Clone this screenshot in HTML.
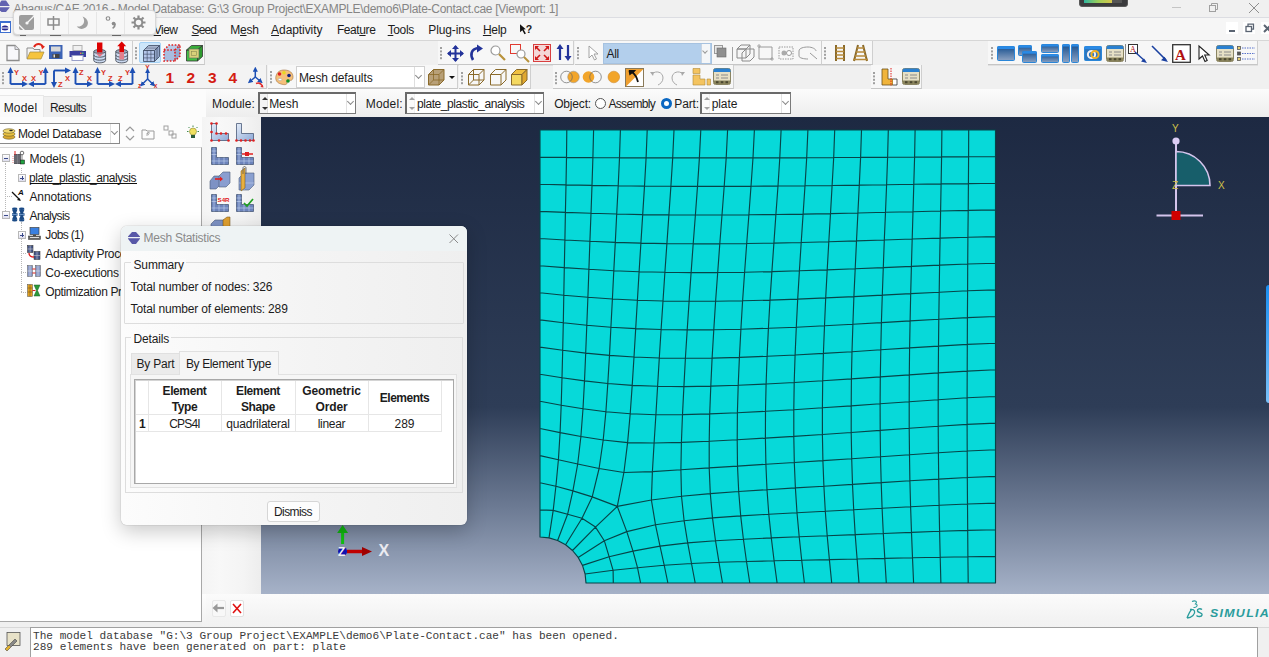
<!DOCTYPE html>
<html><head><meta charset="utf-8">
<style>
*{margin:0;padding:0;box-sizing:border-box}
html,body{width:1269px;height:657px;overflow:hidden;background:#f0f0f0;font-family:"Liberation Sans",sans-serif;font-size:12px;color:#1c1c1c}
.a{position:absolute}
.t{position:absolute;white-space:nowrap;line-height:14px;font-size:12px}
u{text-decoration:underline;text-underline-offset:1px}
svg{position:absolute;overflow:visible}
.tb{position:absolute;background:#f7f7f7;border-right:1px solid #cfcfcf;border-bottom:1px solid #c6c6c6;box-shadow:0 1px 0 #e0e0e0}
.grip{position:absolute;width:2px;height:2px !important;margin-top:1px;background:#a0a0a0;box-shadow:0 3.4px #a0a0a0,0 6.8px #a0a0a0,0 10.2px #a0a0a0}
.combo{position:absolute;background:#fff;border:1px solid #a9a9a9}
.dd{position:absolute;right:1px;top:1px;bottom:1px;width:9px;border-left:1px solid #e2e2e2;background:#fff}
.dd:after{content:"";position:absolute;left:1px;top:5px;width:4px;height:4px;border-right:1px solid #777;border-bottom:1px solid #777;transform:rotate(45deg)}
.spin{position:absolute;left:1px;top:1px;bottom:1px;width:9px;border-right:1px solid #e0e0e0;background:#f4f4f4}
.spin:before{content:"";position:absolute;left:2px;top:3px;border-left:3px solid transparent;border-right:3px solid transparent;border-bottom:3px solid #333}
.spin:after{content:"";position:absolute;left:2px;bottom:3px;border-left:3px solid transparent;border-right:3px solid transparent;border-top:3px solid #333}
.mono{position:absolute;white-space:pre;font-family:"Liberation Mono",monospace;font-size:11.1px;line-height:11px;color:#111}
</style></head><body>

<!-- title bar -->
<div class="a" style="left:0;top:0;width:1269px;height:18px;background:#f0f0f0"></div>
<svg style="left:0;top:0" width="12" height="14"><path d="M1.5 0.5H6L9.5 5.5V6H-2.5V5.5Z" fill="#6262b0"/><path d="M-2.5 7.2H9.5V7.7L6 12H1.5L-2.5 7.7Z" fill="#6262b0"/></svg>
<div class="t" style="left:13.5px;top:1.5px;color:#858585;letter-spacing:-0.28px">Abaqus/CAE 2016 - Model Database: G:\3 Group Project\EXAMPLE\demo6\Plate-Contact.cae [Viewport: 1]</div>
<div class="a" style="left:1079px;top:-4px;width:49px;height:11px;background:#3b3b3d;border-radius:3px;border:1px solid #5a5a5a"></div>
<div class="a" style="left:1084px;top:0px;width:28px;height:3px;background:linear-gradient(90deg,#2fb5a0,#9bcf5a,#d7c74b)"></div>
<div class="a" style="left:1112px;top:0px;width:10px;height:3px;background:#555"></div>
<div class="a" style="left:1172px;top:7px;width:9px;height:1px;background:#c4c4c4"></div>
<svg style="left:1208px;top:2px" width="12" height="12"><rect x="1.5" y="3.5" width="6" height="6" fill="none" stroke="#a0a0a0"/><path d="M3.5 3.5V1.5h6v6h-2" fill="none" stroke="#a0a0a0"/></svg>
<svg style="left:1248px;top:2px" width="12" height="12"><path d="M1 1L11 11M11 1L1 11" stroke="#8e8e8e" stroke-width="1"/></svg>

<!-- menubar -->
<div class="a" style="left:0;top:17px;width:1269px;height:23px;background:#f6f6f6;border-top:1px solid #dcdde2"></div>
<div class="a" style="left:0;top:40px;width:1269px;height:1px;background:#d6d6d6"></div>
<svg style="left:0;top:21px" width="12" height="12"><rect x="0.5" y="0.5" width="10" height="11" fill="#fff" stroke="#3d6fd0"/><rect x="0" y="0" width="11" height="2" fill="#3d6fd0"/><ellipse cx="5" cy="7" rx="3.5" ry="2.5" fill="#2a2a8e"/><rect x="1" y="6.5" width="8" height="1" fill="#fff"/></svg>
<div class="t" style="left:153.7px;top:23px;letter-spacing:-0.50px"><u>V</u>iew</div>
<div class="t" style="left:191.6px;top:23px;letter-spacing:-0.87px"><u>S</u>eed</div>
<div class="t" style="left:230.2px;top:23px;letter-spacing:-0.17px">M<u>e</u>sh</div>
<div class="t" style="left:271.1px;top:23px;letter-spacing:-0.08px"><u>A</u>daptivity</div>
<div class="t" style="left:336.9px;top:23px;letter-spacing:-0.40px">Feat<u>u</u>re</div>
<div class="t" style="left:387.7px;top:23px;letter-spacing:-0.38px"><u>T</u>ools</div>
<div class="t" style="left:428.3px;top:23px;letter-spacing:-0.14px">Plu<u>g</u>-ins</div>
<div class="t" style="left:482.9px;top:23px;letter-spacing:-0.30px"><u>H</u>elp</div>
<svg style="left:519px;top:23px" width="14" height="12"><path d="M1 1.2L6.8 6.2L4.6 6.6L6.9 10.5L5.5 11.2L3.3 7.3L1.1 9.2Z" fill="#111"/><text x="6.8" y="10" font-size="10.5" font-family="Liberation Sans" font-weight="bold" fill="#222">?</text></svg>
<!-- mdi controls -->
<div class="a" style="left:1226px;top:22px;width:12px;height:12px;background:#fff"></div>
<div class="a" style="left:1229px;top:30px;width:6px;height:2px;background:#5a6472"></div>
<div class="a" style="left:1243px;top:22px;width:12px;height:12px;background:#fff"></div>
<svg style="left:1245px;top:23px" width="10" height="10"><rect x="1" y="3.5" width="5.5" height="5" fill="none" stroke="#5a6472" stroke-width="1.3"/><path d="M3 3V1.2h5.5v5h-1.5" fill="none" stroke="#5a6472" stroke-width="1.3"/></svg>
<div class="a" style="left:1261px;top:22px;width:12px;height:12px;background:#fff"></div>
<svg style="left:1263px;top:24px" width="10" height="10"><path d="M1 1L8 8M8 1L1 8" stroke="#5a6472" stroke-width="2"/></svg>

<!-- IME popup -->
<div class="a" style="left:12.5px;top:10px;width:143px;height:25px;background:#f7f7f7;border:1px solid #d8d8d8;border-radius:4px;box-shadow:0 1px 2px rgba(0,0,0,0.22)"></div>
<div class="a" style="left:40px;top:12px;width:1px;height:22px;background:#e6e6e6"></div>
<div class="a" style="left:68px;top:12px;width:1px;height:22px;background:#e6e6e6"></div>
<div class="a" style="left:96px;top:12px;width:1px;height:22px;background:#e6e6e6"></div>
<div class="a" style="left:124px;top:12px;width:1px;height:22px;background:#e6e6e6"></div>
<svg style="left:19px;top:15px" width="16" height="16"><rect x="0" y="0" width="15" height="15" rx="2" fill="#9d9d9d"/><path d="M-1 9L7 17M8 8L15 1" stroke="#f6f6f6" stroke-width="1.3"/><circle cx="8" cy="8" r="1.6" fill="#f6f6f6"/></svg>
<svg style="left:46px;top:15px" width="16" height="16"><rect x="2" y="4" width="11" height="6" fill="none" stroke="#8c8c8c" stroke-width="1.5"/><path d="M7.5 1V15" stroke="#8c8c8c" stroke-width="1.5"/></svg>
<svg style="left:75px;top:15px" width="16" height="16"><path d="M7.6 1.4C13.5 3 15.5 11 8.5 13.6C6 14.4 3.5 13.4 1.7 11.5C7.5 12.4 11.5 7 7.6 1.4Z" fill="#a0a0a0"/></svg>
<svg style="left:104px;top:15px" width="16" height="16"><circle cx="4" cy="3.5" r="1.8" fill="none" stroke="#8c8c8c" stroke-width="1.1"/><circle cx="9.6" cy="8.6" r="1.9" fill="#8c8c8c"/><path d="M11.2 8.8c0 2-1 3.6-2.6 4.6" stroke="#8c8c8c" stroke-width="1.6" fill="none"/></svg>
<svg style="left:131px;top:15px" width="16" height="16"><circle cx="7.5" cy="7.5" r="3.8" fill="none" stroke="#8c8c8c" stroke-width="2"/><path d="M7.5 0.5V3M7.5 12V14.5M0.5 7.5H3M12 7.5H14.5M2.5 2.5L4.3 4.3M10.7 10.7L12.5 12.5M12.5 2.5L10.7 4.3M4.3 10.7L2.5 12.5" stroke="#8c8c8c" stroke-width="2.2"/></svg>


<div class="a" style="left:20px;top:35px;width:6px;height:1px;background:#666"></div>
<div class="a" style="left:50px;top:35px;width:11px;height:1px;background:#666"></div>
<div class="a" style="left:112px;top:35px;width:9px;height:1px;background:#666"></div>
<!-- toolbar rows -->
<div class="a" style="left:0;top:41px;width:1269px;height:48px;background:#f0f0f0"></div>
<!-- R1 T1 -->
<div class="tb" style="left:0;top:41px;width:133px;height:24px;border-right:1px solid #cfcfcf"></div>
<svg style="left:6px;top:44px" width="14" height="18"><path d="M1 1.5h8l4 4v11h-12z" fill="#f7f7fb" stroke="#8d8d8d" stroke-width="1.3"/><path d="M9 1.5v4h4" fill="#e0e0e8" stroke="#9a9a9a"/></svg>
<svg style="left:26px;top:43px" width="20" height="18"><path d="M1 5h6l1 1.5h6v9H1z" fill="#f4f4f4" stroke="#8c8c8c"/><path d="M1 16L4 9h14l-3 7z" fill="#f6c43c" stroke="#a08a40" stroke-width="0.7"/><path d="M8 4C10 0 15 0 17 4" fill="none" stroke="#e0261b" stroke-width="2"/><path d="M15 2L19 3.5L16 6.5Z" fill="#e0261b"/></svg>
<svg style="left:49px;top:45px" width="14" height="15"><rect x="0" y="0" width="13.5" height="14" fill="#3c63b5"/><rect x="2" y="1.5" width="9.5" height="5" fill="#d8d8d8"/><rect x="3.5" y="9" width="7" height="4" fill="#444"/><rect x="4.5" y="9.5" width="1.5" height="3" fill="#ddd"/></svg>
<svg style="left:69px;top:45px" width="18" height="17"><rect x="4" y="0.5" width="9" height="5" fill="#f0f0f0" stroke="#b0b0b0"/><path d="M0.5 6h16.5v6h-16.5z" fill="#3b3f9e"/><rect x="3" y="10.5" width="11" height="5" fill="#fff" stroke="#9aa0c8"/><rect x="11" y="7.5" width="1.5" height="1.5" fill="#e08050"/><rect x="13" y="7.5" width="1.5" height="1.5" fill="#50c070"/></svg>
<svg style="left:93px;top:42px" width="14" height="21"><path d="M0.8 9.5v9a5.9 2.4 0 0 0 11.8 0v-9" fill="#c9d8ef" stroke="#4a4f5a" stroke-width="0.9"/><path d="M0.8 13a5.9 2.2 0 0 0 11.8 0M0.8 16a5.9 2.2 0 0 0 11.8 0" fill="none" stroke="#4a4f5a" stroke-width="0.9"/><ellipse cx="6.7" cy="9.5" rx="5.9" ry="2" fill="#9aa8bc" stroke="#4a4f5a" stroke-width="0.9"/><path d="M3 11.5h7.4l-3.7 3.6z" fill="#e27884"/><rect x="4" y="0.5" width="5.4" height="10" fill="#dd0000"/></svg>
<svg style="left:115px;top:41px" width="14" height="22"><path d="M0.8 10.5v9a5.9 2.4 0 0 0 11.8 0v-9" fill="#c9d8ef" stroke="#4a4f5a" stroke-width="0.9"/><path d="M0.8 14a5.9 2.2 0 0 0 11.8 0M0.8 17a5.9 2.2 0 0 0 11.8 0" fill="none" stroke="#4a4f5a" stroke-width="0.9"/><ellipse cx="6.7" cy="10.5" rx="5.9" ry="2" fill="#9aa8bc" stroke="#4a4f5a" stroke-width="0.9"/><rect x="4.4" y="11" width="4.6" height="7.5" fill="#e2808c"/><path d="M6.7 0.5L11.2 5.2H9V11H4.4V5.2H2.2z" fill="#dd0000"/></svg>
<!-- R1 T2 -->
<div class="tb" style="left:133px;top:41px;width:72px;height:24px"></div>
<div class="grip" style="left:135px;top:46px;height:13px"></div>
<div class="a" style="left:139px;top:42px;width:22px;height:21px;background:#cde6fa;border:1px solid #a6d2f5;border-radius:2px"></div>
<svg style="left:143px;top:45px" width="17" height="17"><path d="M0.5 5.5h11v11h-11z" fill="#b4c6ea" stroke="#3a4660" stroke-width="0.8"/><path d="M0.5 5.5l5-5h11l-5 5z" fill="#c8d6f0" stroke="#3a4660" stroke-width="0.8"/><path d="M11.5 5.5l5-5v11l-5 5z" fill="#a2b6dc" stroke="#3a4660" stroke-width="0.8"/><path d="M4.2 5.5v11M7.9 5.5v11M0.5 9.2h11M0.5 12.9h11M2.2 3.8h11M3.9 2.1h11M14.8 2.2v11M13.2 3.9v11" stroke="#3a4660" stroke-width="0.6"/></svg>
<svg style="left:163px;top:44px" width="18" height="18"><path d="M1 6h11v11H1z" fill="#a8bde0"/><path d="M1 6l5-5h11l-5 5z" fill="#b8cbe8"/><path d="M12 6l5-5v11l-5 5z" fill="#93abd2"/><path d="M1 6h11v11H1zM1 6l5-5h11v11l-5 5M12 6l5-5" fill="none" stroke="#e02020" stroke-width="1.6" stroke-dasharray="1.6 1.6"/></svg>
<svg style="left:186px;top:45px" width="17" height="17"><path d="M0.5 5h11v11h-11z" fill="#43c043" stroke="#333" stroke-width="0.8"/><path d="M0.5 5l5-4.5h11l-5 4.5z" fill="#3aad3a" stroke="#333" stroke-width="0.8"/><path d="M11.5 5l5-4.5v11l-5 4.5z" fill="#2e9a2e" stroke="#333" stroke-width="0.8"/><rect x="3" y="4" width="10" height="9" fill="#d8d27a" stroke="#666" stroke-width="0.6"/><rect x="5.5" y="6.5" width="5" height="4" fill="none" stroke="#8a8a50" stroke-width="0.6"/></svg>
<!-- R1 T3 view manip -->
<div class="tb" style="left:438px;top:41px;width:136px;height:24px"></div>
<div class="grip" style="left:440px;top:46px;height:13px"></div>
<svg style="left:447px;top:45px" width="17" height="17"><path d="M8.5 1v15M1 8.5h15" stroke="#23339a" stroke-width="2"/><path d="M8.5 0l3.5 4h-7zM8.5 17l3.5-4h-7zM0 8.5l4-3.5v7zM17 8.5l-4-3.5v7z" fill="#23339a"/></svg>
<svg style="left:470px;top:44px" width="14" height="18"><path d="M3 16C0 11 1 5 8 4" fill="none" stroke="#23339a" stroke-width="2.6"/><path d="M7 0.5l6 4-6 4z" fill="#23339a"/></svg>
<svg style="left:490px;top:45px" width="16" height="16"><circle cx="5.5" cy="5.5" r="4.5" fill="#fff" stroke="#9a9a9a" stroke-width="1.2"/><path d="M9 9l6 6" stroke="#b8923a" stroke-width="2.2"/></svg>
<svg style="left:510px;top:44px" width="20" height="18"><rect x="0.5" y="0.5" width="10" height="9" fill="none" stroke="#e03a30" stroke-width="1"/><circle cx="11" cy="10" r="4" fill="#fff" stroke="#9a9a9a" stroke-width="1.2"/><path d="M14 13l5 5" stroke="#b8923a" stroke-width="2"/></svg>
<svg style="left:533px;top:44px" width="18" height="18"><rect x="0.5" y="0.5" width="17" height="17" fill="#f4d8d8" stroke="#d84040" stroke-width="1"/><path d="M3 3l4 4M15 3l-4 4M3 15l4-4M15 15l-4-4" stroke="#d01818" stroke-width="1.6"/><path d="M2 2h4l-4 4zM16 2h-4l4 4zM2 16h4l-4-4zM16 16h-4l4-4z" fill="#d01818"/></svg>
<svg style="left:556px;top:44px" width="17" height="17"><path d="M4 16V3M12 1v13" stroke="#23339a" stroke-width="2.2"/><path d="M4 0l3.5 5h-7zM12 17l3.5-5h-7z" fill="#23339a"/></svg>
<!-- R1 T4 select -->
<div class="tb" style="left:575px;top:41px;width:247px;height:24px"></div>
<div class="grip" style="left:577px;top:46px;height:13px"></div>
<svg style="left:588px;top:45px" width="12" height="16"><path d="M1 1v12l3-3 2.5 5 2-1-2.5-5h4z" fill="#fff" stroke="#9a9a9a" stroke-width="0.9"/></svg>
<div class="a" style="left:603px;top:43px;width:109px;height:21px;background:#b3cfec;border:1px solid #a6c2e0"></div>
<div class="a" style="left:701px;top:44px;width:9px;height:19px;background:#f4f6f8;border-left:1px solid #c8d4e2"></div>
<div class="a" style="left:703px;top:49px;width:4px;height:4px;border-right:1px solid #999;border-bottom:1px solid #999;transform:rotate(45deg)"></div>
<div class="t" style="left:606.5px;top:47px;letter-spacing:-0.35px">All</div>
<svg style="left:714px;top:45px" width="14" height="16"><rect x="0.5" y="0.5" width="8" height="8" fill="#e8e8e8" stroke="#9a9a9a"/><rect x="3" y="3" width="9" height="9" fill="#8f8f8f" stroke="#6a6a6a" stroke-width="0.6"/></svg>
<div class="a" style="left:732px;top:47px;width:1px;height:14px;background:#a0a0a0"></div>
<svg style="left:736px;top:44px" width="20" height="18"><path d="M1 5l4-4h9l-4 4zM1 5h9v9H1zM10 5l4-4v9l-4 4" fill="#f6f6f6" stroke="#8a8a8a" stroke-width="1"/><path d="M6 9l4-4h8v8l-4 4H6z" fill="none" stroke="#8a8a8a"/></svg>
<svg style="left:757px;top:44px" width="18" height="18"><path d="M2 3h13v12H2z" fill="none" stroke="#9a9a9a"/><path d="M2 0v4M0 2h4M15 13v4M13 15h4" stroke="#9a9a9a" stroke-width="0.8"/></svg>
<svg style="left:777px;top:44px" width="20" height="18"><path d="M2 3h14v12H2z" fill="none" stroke="#9a9a9a" stroke-dasharray="1.5 1"/><circle cx="7" cy="9" r="2.5" fill="#aaa"/><circle cx="12" cy="9" r="2.5" fill="#fff" stroke="#999"/></svg>
<svg style="left:798px;top:44px" width="22" height="18"><path d="M1 7C1 4 6 3 10 3s8 2 8 4" fill="none" stroke="#9a9a9a"/><path d="M1 7v5c0 2 5 3 9 3M12 9l7 6" stroke="#9a9a9a" fill="none"/></svg>
<!-- R1 T5 -->
<div class="tb" style="left:822px;top:41px;width:51px;height:24px"></div>
<div class="grip" style="left:824px;top:46px;height:13px"></div>
<svg style="left:833px;top:45px" width="14" height="16"><path d="M3 0v16M11 0v16" stroke="#8a6a2a" stroke-width="2"/><path d="M3 3h8M3 6.5h8M3 10h8M3 13.5h8" stroke="#b88a3a" stroke-width="1.6"/></svg>
<svg style="left:852px;top:45px" width="17" height="16"><path d="M6 0L2 16M11 0l4 16" stroke="#8a6a2a" stroke-width="2"/><path d="M5 3h7M4 7h9M3 11h11M1 14.5h15" stroke="#b88a3a" stroke-width="1.6"/></svg>
<!-- R1 T6 windows -->
<div class="tb" style="left:988px;top:41px;width:270px;height:24px"></div>
<div class="grip" style="left:991px;top:46px;height:13px"></div>
<svg style="left:0;top:0" width="0" height="0"><defs><linearGradient id="wg" x1="0" y1="0" x2="0" y2="1"><stop offset="0" stop-color="#174f8e"/><stop offset="1" stop-color="#8da3c3"/></linearGradient></defs></svg>
<svg style="left:997px;top:46px" width="19" height="16"><rect x="0.5" y="0.5" width="17" height="14" rx="1" fill="url(#wg)" stroke="#2a86d8"/><rect x="0.5" y="0.5" width="17" height="2.5" fill="#2a8ae6"/></svg>
<svg style="left:1018px;top:45px" width="20" height="18"><rect x="0.5" y="0.5" width="13" height="10" rx="1" fill="url(#wg)" stroke="#2a86d8"/><rect x="0.5" y="0.5" width="13" height="2.2" fill="#2a8ae6"/><rect x="4.5" y="6.5" width="14" height="11" rx="1" fill="url(#wg)" stroke="#2a86d8"/><rect x="4.5" y="6.5" width="14" height="2.2" fill="#2a8ae6"/></svg>
<svg style="left:1041px;top:44px" width="18" height="19"><rect x="0.5" y="0.5" width="17" height="8" rx="1" fill="url(#wg)" stroke="#2a86d8"/><rect x="0.5" y="0.5" width="17" height="2" fill="#2a8ae6"/><rect x="0.5" y="10.5" width="17" height="8" rx="1" fill="url(#wg)" stroke="#2a86d8"/><rect x="0.5" y="10.5" width="17" height="2" fill="#2a8ae6"/></svg>
<svg style="left:1062px;top:44px" width="18" height="19"><rect x="0.5" y="0.5" width="7" height="18" rx="1" fill="url(#wg)" stroke="#2a86d8"/><rect x="0.5" y="0.5" width="7" height="2" fill="#2a8ae6"/><rect x="9.5" y="0.5" width="7" height="18" rx="1" fill="url(#wg)" stroke="#2a86d8"/><rect x="9.5" y="0.5" width="7" height="2" fill="#2a8ae6"/></svg>
<svg style="left:1084px;top:46px" width="19" height="16"><rect x="0.5" y="0.5" width="17" height="14" rx="1" fill="#2a76c0" stroke="#2a86d8"/><rect x="0.5" y="0.5" width="17" height="2.5" fill="#2a8ae6"/><circle cx="7.5" cy="8.5" r="3.6" fill="none" stroke="#f4f0f0" stroke-width="2"/><circle cx="11" cy="8.5" r="3.6" fill="none" stroke="#f0b020" stroke-width="2"/></svg>
<svg style="left:1106px;top:45px" width="19" height="18"><rect x="0.5" y="0.5" width="17" height="16" rx="2" fill="#e6e0c6" stroke="#8a8462"/><path d="M0.5 4V2.5a2 2 0 0 1 2-2h13a2 2 0 0 1 2 2V4z" fill="#2a80d0"/><path d="M3 7h3M8 7h7M3 10h3M8 10h7" stroke="#8a8a8a" stroke-width="1.1"/><rect x="1" y="12.5" width="16" height="3.5" fill="#8a845c"/><rect x="3" y="13.2" width="2.5" height="2" fill="#4a4630"/><rect x="7.8" y="13.2" width="2.5" height="2" fill="#4a4630"/><rect x="12.5" y="13.2" width="2.5" height="2" fill="#4a4630"/></svg>
<div class="a" style="left:1125px;top:44px;width:1px;height:18px;background:#888"></div>
<svg style="left:1128px;top:44px" width="20" height="19"><rect x="0.5" y="0.5" width="9" height="9" fill="#fff" stroke="#333"/><text x="2" y="8" font-size="8" font-family="Liberation Serif" fill="#b01010">A</text><path d="M7 8l10 9" stroke="#1a40a0" stroke-width="1.4"/><path d="M19 19l-6-1.5 3-3z" fill="#1a40a0"/></svg>
<svg style="left:1151px;top:45px" width="18" height="18"><path d="M1 1l14 14" stroke="#1a40a0" stroke-width="1.6"/><path d="M17 17l-7-1.8 3.5-3.5z" fill="#1a40a0"/></svg>
<svg style="left:1172px;top:44px" width="19" height="19"><rect x="0.7" y="0.7" width="17.6" height="17.6" fill="#fff" stroke="#333" stroke-width="1.3"/><text x="3" y="15.5" font-size="15" font-family="Liberation Serif" font-weight="bold" fill="#b01010">A</text></svg>
<svg style="left:1198px;top:45px" width="13" height="17"><path d="M1 1v13l3.5-3 2.5 5.5 2.2-1-2.5-5.5h4.5z" fill="#fff" stroke="#222" stroke-width="1.1"/></svg>
<svg style="left:1216px;top:45px" width="19" height="18"><rect x="0.5" y="0.5" width="17" height="16" rx="2" fill="#e6e0c6" stroke="#8a8462"/><path d="M0.5 4V2.5a2 2 0 0 1 2-2h13a2 2 0 0 1 2 2V4z" fill="#2a80d0"/><path d="M3 7h3M8 7h7M3 10h3M8 10h7" stroke="#8a8a8a" stroke-width="1.1"/><rect x="1" y="12.5" width="16" height="3.5" fill="#8a845c"/><rect x="3" y="13.2" width="2.5" height="2" fill="#4a4630"/><rect x="7.8" y="13.2" width="2.5" height="2" fill="#4a4630"/><rect x="12.5" y="13.2" width="2.5" height="2" fill="#4a4630"/></svg>
<svg style="left:1237px;top:46px" width="19" height="15"><rect x="0.5" y="0.5" width="3" height="3" fill="#e8d070" stroke="#555" stroke-width="0.8"/><rect x="0.5" y="6" width="3" height="3" fill="#555" stroke="#555" stroke-width="0.8"/><rect x="0.5" y="11.5" width="3" height="3" fill="#e8d070" stroke="#555" stroke-width="0.8"/><path d="M5 2h13M5 7.5h13M5 13h13" stroke="#3050c0" stroke-width="0.8" stroke-dasharray="1.5 1"/></svg>


<!-- R2 T1 views -->
<div class="tb" style="left:0;top:65px;width:267px;height:24px;background:#f3f3f3"></div>
<div class="grip" style="left:2px;top:71px;height:12px"></div>
<svg style="left:0;top:65px" width="267" height="24" font-family="Liberation Sans" font-weight="bold" font-size="7.5">
<defs><marker id="ah2" viewBox="0 0 6 6" refX="2" refY="3" markerWidth="3.4" markerHeight="3.4" orient="auto"><path d="M0 0L6 3L0 6z" fill="#1c4fb4"/></marker><marker id="ah" viewBox="0 0 6 6" refX="3" refY="3" markerWidth="3.2" markerHeight="3.2" orient="auto"><path d="M0 0L6 3L0 6z" fill="#1c4fb4"/></marker></defs>
<g stroke="#1c4fb4" stroke-width="1.9" fill="none" marker-end="url(#ah)">
<path d="M10.5 19V5"/><path d="M10.5 19H25"/>
<path d="M45.5 19V5"/><path d="M45.5 19H31"/>
<path d="M54 5.5H68"/><path d="M54 5.5V20"/>
<path d="M75.5 19V5"/><path d="M75.5 19H90"/>
<path d="M97.5 19V5"/><path d="M97.5 19H112"/>
<path d="M132.5 19V5"/><path d="M132.5 19H118"/>
</g>
<g fill="#d8301e">
<text x="14" y="9.5">Y</text><text x="22" y="15.5">X</text>
<text x="38.5" y="9.5">Y</text><text x="31" y="15.5">X</text>
<text x="65" y="15.5">X</text><text x="58" y="22">Z</text>
<text x="79" y="9.5">Z</text><text x="87" y="15.5">X</text>
<text x="101" y="9.5">Y</text><text x="108" y="15.5">Z</text>
<text x="125" y="9.5">Y</text><text x="118" y="15.5">Z</text>
<text x="145.3" y="5.3" font-size="6.5">Y</text><text x="138" y="22.5" font-size="6.5">z</text><text x="153.8" y="23" font-size="6.5">x</text>
</g>
<g stroke="#1c4fb4" stroke-width="1.5" fill="none" marker-end="url(#ah2)"><path d="M147.6 14V6.5"/><path d="M147.6 14L142.5 19"/><path d="M147.6 14L152.7 19"/><path d="M255.3 12V5"/><path d="M255.3 12L250.5 16"/><path d="M255.3 12L260.1 16"/></g>
<path d="M256 18.5c3-1.5 5 0 6.5 2.5" stroke="#e02a2a" stroke-width="1.4" fill="none"/><path d="M263.5 22.5l-3.2-0.5 2.4-2.2z" fill="#e02a2a"/>
<g fill="#d41c12" font-size="15.5"><text x="165.5" y="18">1</text><text x="186.5" y="18">2</text><text x="208" y="18">3</text><text x="228.5" y="18">4</text></g>
</svg>
<!-- R2 T2 -->
<div class="tb" style="left:268px;top:65px;width:190px;height:24px"></div>
<div class="grip" style="left:270px;top:70px;height:13px"></div>
<svg style="left:275px;top:69px" width="19" height="16"><path d="M9 1C15 1 18 4 18 8c0 3-2 4-4 3-2-1-3 1-2 3 0 2-3 2-6 1C2 14 0 11 1 7 2 3 5 1 9 1z" fill="#f5c07a" stroke="#a07040" stroke-width="0.6"/><circle cx="4.5" cy="5" r="1.8" fill="#e02020"/><circle cx="9" cy="3.8" r="1.8" fill="#e8d820"/><circle cx="14" cy="6.5" r="1.8" fill="#102080"/><circle cx="13" cy="12" r="1.8" fill="#109020"/><ellipse cx="5" cy="10.5" rx="1.8" ry="1.2" fill="#fff" stroke="#999" stroke-width="0.5"/></svg>
<div class="combo" style="left:296px;top:66px;width:129px;height:22px;border-color:#d0d0d0"></div>
<div class="a" style="left:414px;top:67px;width:10px;height:20px;border-left:1px solid #dedede;background:#fff"></div>
<div class="a" style="left:416px;top:73px;width:5px;height:5px;border-right:1px solid #8a8a8a;border-bottom:1px solid #8a8a8a;transform:rotate(45deg)"></div>
<div class="t" style="left:298.9px;top:71.1px;letter-spacing:-0.08px">Mesh defaults</div>
<svg style="left:428px;top:69px" width="28" height="17"><path d="M0.5 5.5l5-5h10.5v10.5l-5 5H0.5z" fill="#b8a078" stroke="#8a6a2a"/><path d="M0.5 5.5h10.5v10.5M11 5.5l5-5M5.5 0.5v10.5h10.5M5.5 11l-5 5" fill="none" stroke="#8a6a2a" stroke-width="0.8"/><path d="M21 7h6l-3 3z" fill="#111"/></svg>
<!-- R2 T3 -->
<div class="tb" style="left:459px;top:65px;width:72px;height:24px"></div>
<div class="grip" style="left:461px;top:71px;height:12px"></div>
<svg style="left:468px;top:69px" width="17" height="17"><path d="M0.5 5.5l5-5h10.5v10.5l-5 5H0.5z M0.5 5.5h10.5v10.5M11 5.5l5-5M5.5 0.5v10.5h10.5M5.5 11l-5 5" fill="none" stroke="#8a6a2a" stroke-width="1"/></svg>
<svg style="left:490px;top:69px" width="17" height="17"><path d="M0.5 5.5l5-5h10.5v10.5l-5 5H0.5z M0.5 5.5h10.5v10.5M11 5.5l5-5" fill="none" stroke="#8a6a2a" stroke-width="1"/></svg>
<svg style="left:511px;top:69px" width="17" height="17"><path d="M0.5 5.5h10.5v10.5H0.5z" fill="#f4d860" stroke="#8a6a2a"/><path d="M0.5 5.5l5-5h10.5l-5 5z" fill="#f0c040" stroke="#8a6a2a"/><path d="M11 5.5l5-5v10.5l-5 5z" fill="#e0a830" stroke="#8a6a2a"/></svg>
<!-- R2 T4 -->
<div class="tb" style="left:553px;top:65px;width:181px;height:24px"></div>
<div class="grip" style="left:555px;top:71px;height:12px"></div>
<svg style="left:560px;top:70px" width="20" height="14"><circle cx="13.5" cy="7" r="5.8" fill="#f2a52a"/><circle cx="6.5" cy="7" r="5.8" fill="none" stroke="#666" stroke-width="0.7"/><circle cx="13.5" cy="7" r="5.8" fill="none" stroke="#888" stroke-width="0.5"/></svg>
<svg style="left:582px;top:70px" width="20" height="14"><circle cx="6.5" cy="7" r="5.8" fill="#f2a52a"/><circle cx="13.5" cy="7" r="5.8" fill="none" stroke="#666" stroke-width="0.7"/></svg>
<svg style="left:607px;top:70px" width="14" height="14"><circle cx="6.8" cy="7" r="5.8" fill="#f2a52a" stroke="#c88020" stroke-width="0.5"/></svg>
<svg style="left:625px;top:68px" width="20" height="19"><rect x="0.5" y="0.5" width="18" height="18" fill="#fff" stroke="#8a7a5a"/><path d="M1 1h17.5L1 18.5z" fill="#f0a030"/><path d="M4 3l5 0-1.5 1.5C11 7 12 10 13 14" fill="none" stroke="#111" stroke-width="1.8"/><path d="M3.5 2.5l6 1-5 4z" fill="#111"/></svg>
<svg style="left:650px;top:70px" width="14" height="16"><path d="M2 4C6 0 13 2 13 8c0 4-3 6-5 7" fill="none" stroke="#a8a8a8" stroke-width="1"/><path d="M0 2l4 0-1 4z" fill="#a8a8a8"/></svg>
<svg style="left:671px;top:70px" width="14" height="16"><path d="M12 4C8 0 1 2 1 8c0 4 3 6 5 7" fill="none" stroke="#a8a8a8" stroke-width="1"/><path d="M14 2l-4 0 1 4z" fill="#a8a8a8"/></svg>
<svg style="left:692px;top:68px" width="20" height="18"><path d="M1 0.5h7v5H1z" fill="#f4c460" stroke="#b08a3a" stroke-width="0.6"/><path d="M1 7h7v4h5v6H1z" fill="#f4c460" stroke="#b08a3a" stroke-width="0.6"/><path d="M15 11h3.5v6H15z" fill="#f4c460" stroke="#b08a3a" stroke-width="0.6"/></svg>
<svg style="left:713px;top:68px" width="19" height="18"><rect x="0.5" y="0.5" width="17" height="16" rx="2" fill="#e6e0c6" stroke="#8a8462"/><path d="M0.5 4V2.5a2 2 0 0 1 2-2h13a2 2 0 0 1 2 2V4z" fill="#2a80d0"/><path d="M3 7h3M8 7h7M3 10h3M8 10h7" stroke="#8a8a8a" stroke-width="1.1"/><rect x="1" y="12.5" width="16" height="3.5" fill="#8a845c"/><rect x="3" y="13.2" width="2.5" height="2" fill="#4a4630"/><rect x="7.8" y="13.2" width="2.5" height="2" fill="#4a4630"/><rect x="12.5" y="13.2" width="2.5" height="2" fill="#4a4630"/></svg>
<!-- R2 T5 -->
<div class="tb" style="left:871px;top:65px;width:51px;height:24px"></div>
<div class="grip" style="left:873px;top:71px;height:12px"></div>
<svg style="left:881px;top:68px" width="17" height="18"><path d="M1 1h6v10h5v6H1z" fill="#f0b43a" stroke="#6a5020" stroke-width="0.8"/><path d="M12 11h4v6h-4" fill="#fff" stroke="#333" stroke-width="0.8"/><path d="M10 0v18" stroke="#e02020" stroke-width="1" stroke-dasharray="1.5 1"/></svg>
<svg style="left:902px;top:68px" width="19" height="18"><rect x="0.5" y="0.5" width="17" height="16" rx="2" fill="#e6e0c6" stroke="#8a8462"/><path d="M0.5 4V2.5a2 2 0 0 1 2-2h13a2 2 0 0 1 2 2V4z" fill="#2a80d0"/><path d="M3 7h3M8 7h7M3 10h3M8 10h7" stroke="#8a8a8a" stroke-width="1.1"/><rect x="1" y="12.5" width="16" height="3.5" fill="#8a845c"/><rect x="3" y="13.2" width="2.5" height="2" fill="#4a4630"/><rect x="7.8" y="13.2" width="2.5" height="2" fill="#4a4630"/><rect x="12.5" y="13.2" width="2.5" height="2" fill="#4a4630"/></svg>


<!-- module row -->
<div class="a" style="left:0;top:89px;width:1269px;height:28px;background:linear-gradient(#fbfbfb,#ededed)"></div>
<div class="a" style="left:0;top:89px;width:206px;height:28px;background:#fcfcfc"></div>
<!-- tabs -->
<div class="a" style="left:0;top:95px;width:44px;height:23px;background:#fafafa;border-top:1px solid #e8e8e8;border-right:1px solid #e8e8e8"></div>
<div class="a" style="left:44px;top:96px;width:48px;height:21px;background:#f0f0f0;border:1px solid #e4e4e4;border-left:none;border-bottom:none"></div>
<div class="t" style="left:3.7px;top:100.7px;letter-spacing:0.17px">Model</div>
<div class="t" style="left:50px;top:100.7px;letter-spacing:-0.58px">Results</div>
<div class="t" style="left:212px;top:97.2px;letter-spacing:0.02px">Module:</div>
<div class="combo" style="left:258px;top:92px;width:98px;height:22px;border:1px solid #7a7a7a;border-top:2px solid #6a6a6a;border-left:2px solid #6a6a6a"></div>
<div class="spin" style="left:260px;top:94px;width:8px;height:19px"></div>
<div class="a" style="left:346px;top:94px;width:9px;height:19px;border-left:1px solid #e2e2e2"></div>
<div class="a" style="left:348px;top:99px;width:5px;height:5px;border-right:1px solid #8a8a8a;border-bottom:1px solid #8a8a8a;transform:rotate(45deg)"></div>
<div class="t" style="left:269.2px;top:97.2px;letter-spacing:-0.07px">Mesh</div>
<div class="t" style="left:365.8px;top:97.2px;letter-spacing:0.16px">Model:</div>
<div class="combo" style="left:405px;top:92px;width:139px;height:22px;border:1px solid #7a7a7a;border-top:2px solid #6a6a6a;border-left:2px solid #6a6a6a"></div>
<div class="spin" style="left:407px;top:94px;width:8px;height:19px;opacity:0.45"></div>
<div class="a" style="left:534px;top:94px;width:9px;height:19px;border-left:1px solid #e2e2e2"></div>
<div class="a" style="left:536px;top:99px;width:5px;height:5px;border-right:1px solid #8a8a8a;border-bottom:1px solid #8a8a8a;transform:rotate(45deg)"></div>
<div class="t" style="left:416.9px;top:97.2px;letter-spacing:-0.42px">plate_plastic_analysis</div>
<div class="t" style="left:554.2px;top:97.2px;letter-spacing:-0.17px">Object:</div>
<div class="a" style="left:595px;top:98px;width:11px;height:11px;border:1px solid #555;border-radius:50%;background:#fff"></div>
<div class="t" style="left:608.4px;top:97.2px;letter-spacing:-0.67px">Assembly</div>
<div class="a" style="left:661px;top:98px;width:11px;height:11px;border:3px solid #0a67c2;border-radius:50%;background:#fff"></div>
<div class="t" style="left:674.3px;top:97.2px;letter-spacing:-0.12px">Part:</div>
<div class="combo" style="left:700px;top:92px;width:91px;height:22px;border:1px solid #7a7a7a;border-top:2px solid #6a6a6a;border-left:2px solid #6a6a6a"></div>
<div class="spin" style="left:702px;top:94px;width:8px;height:19px;opacity:0.45"></div>
<div class="a" style="left:781px;top:94px;width:9px;height:19px;border-left:1px solid #e2e2e2"></div>
<div class="a" style="left:783px;top:99px;width:5px;height:5px;border-right:1px solid #8a8a8a;border-bottom:1px solid #8a8a8a;transform:rotate(45deg)"></div>
<div class="t" style="left:711.7px;top:97.2px;letter-spacing:-0.08px">plate</div>

<!-- left panel -->
<div class="a" style="left:0;top:117px;width:202px;height:505px;background:#fcfcfc"></div>
<div class="combo" style="left:0;top:123px;width:120px;height:21px;border:1px solid #8a8a8a;border-left:none"></div>
<div class="a" style="left:110px;top:124px;width:10px;height:19px;border-left:1px solid #e0e0e0"></div>
<div class="a" style="left:112px;top:129px;width:5px;height:5px;border-right:1px solid #8a8a8a;border-bottom:1px solid #8a8a8a;transform:rotate(45deg)"></div>
<svg style="left:2px;top:127px" width="14" height="13"><ellipse cx="7" cy="10" rx="6" ry="2.2" fill="#d9a830" stroke="#6a5a20" stroke-width="0.6"/><ellipse cx="7" cy="7" rx="6" ry="2.2" fill="#e8c040" stroke="#6a5a20" stroke-width="0.6"/><ellipse cx="7" cy="4" rx="6" ry="2.2" fill="#f0d870" stroke="#6a5a20" stroke-width="0.6"/><ellipse cx="9" cy="3.5" rx="1.8" ry="0.8" fill="#222"/></svg>
<div class="t" style="left:17.9px;top:127.2px;letter-spacing:-0.28px">Model Database</div>
<svg style="left:124px;top:125px" width="12" height="17"><path d="M2 6l4-4 4 4M2 11l4 4 4-4" fill="none" stroke="#9a9a9a" stroke-width="1.2"/></svg>
<svg style="left:141px;top:126px" width="14" height="14"><path d="M1 4h4l1 1h7v8H1z" fill="none" stroke="#9a9a9a"/><path d="M6 10V7h3M8 6l-2 1.5L8 9" stroke="#9a9a9a" fill="none" stroke-width="0.8"/></svg>
<svg style="left:163px;top:125px" width="14" height="14"><rect x="1" y="1" width="4" height="4" fill="none" stroke="#a0a0a0"/><rect x="6" y="6" width="4" height="4" fill="none" stroke="#a0a0a0"/><rect x="9" y="9" width="4" height="4" fill="none" stroke="#a0a0a0"/></svg>
<svg style="left:186px;top:125px" width="14" height="16"><circle cx="7" cy="6.5" r="3.5" fill="#f0e060" stroke="#8a8a30" stroke-width="0.6"/><rect x="5" y="10" width="4" height="3" fill="#2a5a3a"/><path d="M7 0.5v1.5M1 6.5h1.5M11.5 6.5H13M2.5 2l1 1M11.5 2l-1 1" stroke="#2a7a3a" stroke-width="0.9"/></svg>
<!-- tree box -->
<div class="a" style="left:0;top:147px;width:202px;height:475px;background:#fff;border-top:1px solid #d8d8d8;border-right:1px solid #a8a8a8;border-bottom:1px solid #a8a8a8"></div>
<!-- tree lines -->
<div class="a" style="left:5px;top:163px;width:0;height:52px;border-left:1px dotted #b8b8b8"></div>
<div class="a" style="left:5px;top:196px;width:7px;height:0;border-top:1px dotted #b8b8b8"></div>
<div class="a" style="left:21px;top:168px;width:0;height:5px;border-left:1px dotted #b8b8b8"></div>
<div class="a" style="left:21px;top:222px;width:0;height:70px;border-left:1px dotted #b8b8b8"></div>
<div class="a" style="left:21px;top:253px;width:5px;height:0;border-top:1px dotted #b8b8b8"></div>
<div class="a" style="left:21px;top:272px;width:5px;height:0;border-top:1px dotted #b8b8b8"></div>
<div class="a" style="left:21px;top:292px;width:5px;height:0;border-top:1px dotted #b8b8b8"></div>
<!-- expanders -->
<div class="a" style="left:2px;top:154px;width:8px;height:8px;border:1px solid #b8b8b8;background:linear-gradient(#fff,#dde)"><div class="a" style="left:1px;top:2.5px;width:4px;height:1px;background:#3a4a8a"></div></div>
<div class="a" style="left:2px;top:211px;width:8px;height:8px;border:1px solid #b8b8b8;background:linear-gradient(#fff,#dde)"><div class="a" style="left:1px;top:2.5px;width:4px;height:1px;background:#3a4a8a"></div></div>
<div class="a" style="left:18px;top:174px;width:8px;height:8px;border:1px solid #b8b8b8;background:linear-gradient(#fff,#dde)"><div class="a" style="left:1px;top:2.5px;width:4px;height:1px;background:#3a4a8a"></div><div class="a" style="left:2.5px;top:1px;width:1px;height:4px;background:#3a4a8a"></div></div>
<div class="a" style="left:18px;top:231px;width:8px;height:8px;border:1px solid #b8b8b8;background:linear-gradient(#fff,#dde)"><div class="a" style="left:1px;top:2.5px;width:4px;height:1px;background:#3a4a8a"></div><div class="a" style="left:2.5px;top:1px;width:1px;height:4px;background:#3a4a8a"></div></div>
<!-- tree icons -->
<svg style="left:12px;top:150px" width="14" height="15"><rect x="2" y="4" width="7" height="10" fill="#5a5a62"/><path d="M2 6h7M2 8h7M2 10h7M2 12h7M5.5 4v10" stroke="#8a8a92" stroke-width="0.6"/><path d="M3 1v4" stroke="#e02020" stroke-width="1"/><path d="M1 6v8" stroke="#e04040" stroke-width="0.6" stroke-dasharray="1 1"/><circle cx="10" cy="3" r="1.8" fill="#fff" stroke="#333" stroke-width="0.7"/><rect x="8.5" y="10" width="4" height="4" fill="#20a040" stroke="#111" stroke-width="0.5"/><path d="M10 5v5" stroke="#333" stroke-width="0.6"/></svg>
<div class="t" style="left:29.5px;top:151.6px;letter-spacing:-0.17px">Models (1)</div>
<div class="t" style="left:29px;top:170.6px;letter-spacing:-0.44px">plate_plastic_analysis</div>
<div class="a" style="left:30px;top:183px;width:107px;height:1px;background:#111"></div>
<svg style="left:11px;top:188px" width="14" height="14"><path d="M1 4l8 8" stroke="#111" stroke-width="1.2"/><path d="M10 13l-4-1 2-2z" fill="#111"/><text x="7" y="7" font-size="8" font-weight="bold" font-style="italic" font-family="Liberation Sans" fill="#111">A</text></svg>
<div class="t" style="left:29.5px;top:189.6px;letter-spacing:-0.15px">Annotations</div>
<svg style="left:11px;top:207px" width="15" height="15"><g fill="#1a4a86"><path d="M1 2.5h5.5L5 6.2h1.5v2.6H5l1.5 3.7H1l1.5-3.7H1V6.2h1.5z"/><path d="M8 2.5h5.5L12 6.2h1.5v2.6H12l1.5 3.7H8l1.5-3.7H8V6.2h1.5z"/><ellipse cx="3.7" cy="1.8" rx="2.7" ry="1.3"/><ellipse cx="3.7" cy="13.2" rx="2.7" ry="1.3"/><ellipse cx="10.7" cy="1.8" rx="2.7" ry="1.3"/><ellipse cx="10.7" cy="13.2" rx="2.7" ry="1.3"/></g><path d="M1 7.5h5.5M8 7.5h5.5" stroke="#8ab0e0" stroke-width="0.7"/></svg>
<div class="t" style="left:29.5px;top:208.8px;letter-spacing:-0.59px">Analysis</div>
<svg style="left:28px;top:227px" width="13" height="13"><rect x="2" y="0.5" width="9" height="7" fill="#3a80e0" stroke="#444" stroke-width="0.7"/><rect x="5" y="7.5" width="3" height="1.5" fill="#555"/><rect x="0.5" y="9" width="12" height="3.5" fill="#666" stroke="#333" stroke-width="0.5"/><rect x="2" y="10" width="9" height="1" fill="#ddd"/></svg>
<div class="t" style="left:45.3px;top:227.6px;letter-spacing:-0.67px">Jobs (1)</div>
<svg style="left:27px;top:245px" width="14" height="15"><rect x="0.5" y="0.5" width="5.5" height="7" fill="#4a5a8a" stroke="#222" stroke-width="0.5"/><path d="M3.2 0.5v7M0.5 4h5.5" stroke="#ddd" stroke-width="0.5"/><rect x="7" y="6.5" width="6" height="8" fill="#4a5a8a" stroke="#222" stroke-width="0.5"/><path d="M10 6.5v8M7 10.5h6" stroke="#ddd" stroke-width="0.5"/><path d="M2 8c0 3 2 4 5 4" stroke="#e02020" stroke-width="1.3" fill="none"/></svg>
<div class="t" style="left:45.3px;top:246.6px;letter-spacing:-0.37px">Adaptivity Processes</div>
<svg style="left:27px;top:265px" width="14" height="12"><rect x="0.5" y="0.5" width="5" height="11" fill="#8a9ac8" stroke="#555" stroke-width="0.5"/><rect x="8.5" y="0.5" width="5" height="11" fill="#8a9ac8" stroke="#555" stroke-width="0.5"/><path d="M3 0.5v11M11 0.5v11M0.5 6h5M8.5 6h5" stroke="#eee" stroke-width="0.5"/><path d="M5.5 4h3M5.5 8h3" stroke="#e02020" stroke-width="1"/></svg>
<div class="t" style="left:45.3px;top:265.6px;letter-spacing:-0.25px">Co-executions</div>
<svg style="left:27px;top:284px" width="14" height="13"><rect x="0.5" y="0.5" width="5" height="12" fill="#e0a020" stroke="#555" stroke-width="0.5"/><path d="M3 0.5v12M0.5 4h5M0.5 8h5" stroke="#6a4a10" stroke-width="0.5"/><path d="M7 1h6l-2.5 5.5L13 12H7l2.5-5.5z" fill="#2a9a3a" stroke="#1a5a20" stroke-width="0.5"/><path d="M5.5 6.5h3" stroke="#e02020" stroke-width="1"/></svg>
<div class="t" style="left:45.3px;top:284.7px;letter-spacing:-0.38px">Optimization Processes</div>

<!-- toolbox -->
<div class="a" style="left:202px;top:117px;width:59px;height:477px;background:linear-gradient(90deg,#f4f4f4,#f8f8f8 30%,#f4f4f4 70%,#ededed)"></div>
<svg style="left:209px;top:121px" width="48" height="110">
<defs><linearGradient id="lg1" x1="0" y1="0" x2="1" y2="1"><stop offset="0" stop-color="#e4ecf8"/><stop offset="1" stop-color="#8eaad8"/></linearGradient></defs>
<g stroke="#4a5a78" stroke-width="0.8">
<path d="M2.5 2.5h5v10h12v7h-17z" fill="url(#lg1)"/>
<path d="M27.5 2.5h5v10h12v7h-17z" fill="url(#lg1)"/>
<path d="M2.5 26.5h5v10h12v7h-17z" fill="#6d84bc"/>
<path d="M27.5 26.5h5v10h12v7h-17z" fill="#6d84bc"/>
<path d="M2.5 73.5h5v10h12v7h-17z" fill="#6d84bc"/>
<path d="M27.5 73.5h5v10h12v7h-17z" fill="#6d84bc"/>
</g>
<g fill="#e02020"><circle cx="2.5" cy="2.5" r="1.3"/><circle cx="7.5" cy="2.5" r="1.3"/><circle cx="2.5" cy="11" r="1.3"/><circle cx="7.5" cy="12.5" r="1.3"/><circle cx="12" cy="12.5" r="1.3"/><circle cx="17" cy="12.5" r="1.3"/><circle cx="2.5" cy="19.5" r="1.3"/><circle cx="10" cy="19.5" r="1.3"/><circle cx="19.5" cy="19.5" r="1.3"/>
<circle cx="27.5" cy="19.5" r="1.3"/><circle cx="32" cy="19.5" r="1.3"/><circle cx="36.5" cy="19.5" r="1.3"/><circle cx="41" cy="19.5" r="1.3"/><circle cx="44.5" cy="19.5" r="1.3"/></g>
<g stroke="#c8d6f0" stroke-width="0.6"><path d="M5 26.5v17M10 36.5v7M15 36.5v7M2.5 30h5M2.5 33.5h5M2.5 40h17M30 26.5v17M35 36.5v7M40 36.5v7M27.5 30h5M27.5 33.5h5M27.5 40h17M5 73.5v17M10 83.5v7M15 83.5v7M2.5 77h5M2.5 80.5h5M2.5 87h17M30 73.5v17M35 83.5v7M40 83.5v7M27.5 77h5M27.5 80.5h5M27.5 87h17"/></g>
<path d="M33 33h11" stroke="#e02020" stroke-width="1.5"/><rect x="36" y="31" width="4" height="4" fill="#e02020"/>
<g stroke="#4a5a78" stroke-width="0.6"><path d="M1 60l4-5h6v9l-4 4H1z" fill="#7d92c4"/><path d="M10 55l4-4h7v11l-4 4h-7z" fill="#8a9ed0"/></g>
<path d="M6 58h7" stroke="#e02020" stroke-width="1.6"/><path d="M14 58l-3-2.5v5z" fill="#e02020"/>
<path d="M30 57l5-5h10v12l-5 5H30z" fill="#8aa0d0" stroke="#4a5a78" stroke-width="0.6"/><path d="M35 52v17M30 62h15" stroke="#c8d6f0" stroke-width="0.5"/><path d="M32 50l4-3v20l-4 3z" fill="#e8b040" stroke="#6a4a10" stroke-width="0.5"/>
<path d="M34 53v-6c0-2 3-2 3 0v6" fill="none" stroke="#555" stroke-width="0.8"/>
<text x="8.5" y="81" font-size="6.2" font-family="Liberation Sans" font-weight="bold" fill="#e02020">S4R</text>
<path d="M35 82l3 3 6-7" stroke="#20a020" stroke-width="1.7" fill="none"/>
<path d="M2 103l4-4h14v10H2z" fill="#7d92c4" stroke="#4a5a78" stroke-width="0.6"/><path d="M14 99l4-3h3v10l-3 3h-4z" fill="#e0a030" stroke="#6a4a10" stroke-width="0.5"/>
</svg>

<!-- viewport -->
<div class="a" style="left:261px;top:117px;width:1008px;height:477px;background:linear-gradient(180deg,#1d2942 0px,#2e3d57 290px,#6c7a93 390px,#a6b2c8 477px)"></div>
<svg style="left:0;top:0" width="1269" height="657"><path d="M540.0 482.7 555.9 486.2 558.4 459.7 540.0 455.6ZM540.0 455.6 558.4 459.7 560.1 432.6 540.0 428.5ZM540.0 428.5 560.1 432.6 561.2 405.2 540.0 401.3ZM540.0 401.3 561.2 405.2 562.0 377.8 540.0 374.2ZM540.0 374.2 562.0 377.8 562.7 350.3 540.0 347.1ZM540.0 347.1 562.7 350.3 563.3 322.8 540.0 319.9ZM540.0 319.9 563.3 322.8 563.8 295.2 540.0 292.8ZM540.0 292.8 563.8 295.2 564.3 267.6 540.0 265.7ZM540.0 265.7 564.3 267.6 564.9 240.0 540.0 238.5ZM540.0 238.5 564.9 240.0 565.4 212.4 540.0 211.4ZM540.0 211.4 565.4 212.4 566.0 184.9 540.0 184.3ZM540.0 184.3 566.0 184.9 566.5 157.4 540.0 157.1ZM540.0 157.1 566.5 157.4 566.8 130.0 540.0 130.0ZM555.9 486.2 572.9 490.9 577.7 464.0 558.4 459.7ZM558.4 459.7 577.7 464.0 580.9 436.5 560.1 432.6ZM560.1 432.6 580.9 436.5 583.0 408.7 561.2 405.2ZM561.2 405.2 583.0 408.7 584.5 380.9 562.0 377.8ZM562.0 377.8 584.5 380.9 585.7 353.1 562.7 350.3ZM562.7 350.3 585.7 353.1 586.8 325.2 563.3 322.8ZM563.3 322.8 586.8 325.2 587.9 297.3 563.8 295.2ZM563.8 295.2 587.9 297.3 588.9 269.3 564.3 267.6ZM564.3 267.6 588.9 269.3 589.9 241.3 564.9 240.0ZM564.9 240.0 589.9 241.3 591.0 213.3 565.4 212.4ZM565.4 212.4 591.0 213.3 592.0 185.4 566.0 184.9ZM566.0 184.9 592.0 185.4 592.9 157.6 566.5 157.4ZM566.5 157.4 592.9 157.6 593.6 130.0 566.8 130.0ZM572.9 490.9 592.2 496.9 599.1 468.5 577.7 464.0ZM577.7 464.0 599.1 468.5 603.2 440.0 580.9 436.5ZM580.9 436.5 603.2 440.0 605.9 411.7 583.0 408.7ZM583.0 408.7 605.9 411.7 607.8 383.5 584.5 380.9ZM584.5 380.9 607.8 383.5 609.5 355.4 585.7 353.1ZM585.7 353.1 609.5 355.4 610.9 327.2 586.8 325.2ZM586.8 325.2 610.9 327.2 612.4 299.0 587.9 297.3ZM587.9 297.3 612.4 299.0 613.8 270.7 588.9 269.3ZM588.9 269.3 613.8 270.7 615.3 242.4 589.9 241.3ZM589.9 241.3 615.3 242.4 616.7 214.0 591.0 213.3ZM591.0 213.3 616.7 214.0 618.2 185.8 592.0 185.4ZM592.0 185.4 618.2 185.8 619.5 157.7 592.9 157.6ZM592.9 157.6 619.5 157.7 620.4 130.0 593.6 130.0ZM592.2 496.9 617.3 506.4 623.9 472.5 599.1 468.5ZM599.1 468.5 623.9 472.5 627.6 442.6 603.2 440.0ZM603.2 440.0 627.6 442.6 630.2 413.8 605.9 411.7ZM605.9 411.7 630.2 413.8 632.2 385.4 607.8 383.5ZM607.8 383.5 632.2 385.4 634.0 357.0 609.5 355.4ZM609.5 355.4 634.0 357.0 635.7 328.6 610.9 327.2ZM610.9 327.2 635.7 328.6 637.4 300.2 612.4 299.0ZM612.4 299.0 637.4 300.2 639.1 271.7 613.8 270.7ZM613.8 270.7 639.1 271.7 640.9 243.1 615.3 242.4ZM615.3 242.4 640.9 243.1 642.7 214.6 616.7 214.0ZM616.7 214.0 642.7 214.6 644.5 186.1 618.2 185.8ZM618.2 185.8 644.5 186.1 646.1 157.8 619.5 157.7ZM619.5 157.7 646.1 157.8 647.2 130.0 620.4 130.0ZM640.6 583.0 667.9 583.0 664.2 565.2 637.5 567.7ZM637.5 567.7 664.2 565.2 660.0 546.1 633.0 551.1ZM633.0 551.1 660.0 546.1 655.5 524.8 626.8 531.6ZM626.8 531.6 655.5 524.8 651.4 500.0 617.3 506.4ZM617.3 506.4 651.4 500.0 652.4 471.6 623.9 472.5ZM623.9 472.5 652.4 471.6 654.1 443.0 627.6 442.6ZM627.6 442.6 654.1 443.0 655.9 414.7 630.2 413.8ZM630.2 413.8 655.9 414.7 657.6 386.3 632.2 385.4ZM632.2 385.4 657.6 386.3 659.3 358.0 634.0 357.0ZM634.0 357.0 659.3 358.0 661.1 329.5 635.7 328.6ZM635.7 328.6 661.1 329.5 663.0 301.0 637.4 300.2ZM637.4 300.2 663.0 301.0 664.9 272.3 639.1 271.7ZM639.1 271.7 664.9 272.3 666.9 243.6 640.9 243.1ZM640.9 243.1 666.9 243.6 668.9 214.9 642.7 214.6ZM642.7 214.6 668.9 214.9 670.9 186.3 644.5 186.1ZM644.5 186.1 670.9 186.3 672.7 157.9 646.1 157.8ZM646.1 157.8 672.7 157.9 674.0 130.0 647.2 130.0ZM667.9 583.0 695.2 583.0 691.5 563.5 664.2 565.2ZM664.2 565.2 691.5 563.5 687.7 542.9 660.0 546.1ZM660.0 546.1 687.7 542.9 684.1 520.7 655.5 524.8ZM655.5 524.8 684.1 520.7 681.5 496.3 651.4 500.0ZM651.4 500.0 681.5 496.3 680.9 469.8 652.4 471.6ZM652.4 471.6 680.9 469.8 681.4 442.4 654.1 443.0ZM654.1 443.0 681.4 442.4 682.5 414.6 655.9 414.7ZM655.9 414.7 682.5 414.6 683.9 386.6 657.6 386.3ZM657.6 386.3 683.9 386.6 685.4 358.3 659.3 358.0ZM659.3 358.0 685.4 358.3 687.2 329.9 661.1 329.5ZM661.1 329.5 687.2 329.9 689.1 301.3 663.0 301.0ZM663.0 301.0 689.1 301.3 691.1 272.6 664.9 272.3ZM664.9 272.3 691.1 272.6 693.2 243.8 666.9 243.6ZM666.9 243.6 693.2 243.8 695.4 215.0 668.9 214.9ZM668.9 214.9 695.4 215.0 697.5 186.4 670.9 186.3ZM670.9 186.3 697.5 186.4 699.4 157.9 672.7 157.9ZM672.7 157.9 699.4 157.9 700.8 130.0 674.0 130.0ZM695.2 583.0 722.5 583.0 719.0 562.3 691.5 563.5ZM691.5 563.5 719.0 562.3 715.5 540.7 687.7 542.9ZM687.7 542.9 715.5 540.7 712.5 517.9 684.1 520.7ZM684.1 520.7 712.5 517.9 710.3 493.6 681.5 496.3ZM681.5 496.3 710.3 493.6 709.2 467.9 680.9 469.8ZM680.9 469.8 709.2 467.9 709.2 441.2 681.4 442.4ZM681.4 442.4 709.2 441.2 709.7 413.9 682.5 414.6ZM682.5 414.6 709.7 413.9 710.8 386.1 683.9 386.6ZM683.9 386.6 710.8 386.1 712.1 358.1 685.4 358.3ZM685.4 358.3 712.1 358.1 713.8 329.7 687.2 329.9ZM687.2 329.9 713.8 329.7 715.6 301.2 689.1 301.3ZM689.1 301.3 715.6 301.2 717.7 272.5 691.1 272.6ZM691.1 272.6 717.7 272.5 719.8 243.8 693.2 243.8ZM693.2 243.8 719.8 243.8 722.0 215.0 695.4 215.0ZM695.4 215.0 722.0 215.0 724.2 186.3 697.5 186.4ZM697.5 186.4 724.2 186.3 726.2 157.9 699.4 157.9ZM699.4 157.9 726.2 157.9 727.6 130.0 700.8 130.0ZM722.5 583.0 749.8 583.0 746.5 561.5 719.0 562.3ZM719.0 562.3 746.5 561.5 743.4 539.2 715.5 540.7ZM715.5 540.7 743.4 539.2 740.7 515.9 712.5 517.9ZM712.5 517.9 740.7 515.9 738.7 491.5 710.3 493.6ZM710.3 493.6 738.7 491.5 737.5 466.1 709.2 467.9ZM709.2 467.9 737.5 466.1 737.2 439.8 709.2 441.2ZM709.2 441.2 737.2 439.8 737.4 412.8 709.7 413.9ZM709.7 413.9 737.4 412.8 738.2 385.3 710.8 386.1ZM710.8 386.1 738.2 385.3 739.4 357.4 712.1 358.1ZM712.1 358.1 739.4 357.4 740.9 329.2 713.8 329.7ZM713.8 329.7 740.9 329.2 742.6 300.8 715.6 301.2ZM715.6 301.2 742.6 300.8 744.6 272.2 717.7 272.5ZM717.7 272.5 744.6 272.2 746.7 243.5 719.8 243.8ZM719.8 243.8 746.7 243.5 748.9 214.8 722.0 215.0ZM722.0 215.0 748.9 214.8 751.0 186.2 724.2 186.3ZM724.2 186.3 751.0 186.2 753.0 157.8 726.2 157.9ZM726.2 157.9 753.0 157.8 754.4 130.0 727.6 130.0ZM749.8 583.0 777.1 583.0 774.1 560.8 746.5 561.5ZM746.5 561.5 774.1 560.8 771.3 537.9 743.4 539.2ZM743.4 539.2 771.3 537.9 768.8 514.2 740.7 515.9ZM740.7 515.9 768.8 514.2 767.0 489.7 738.7 491.5ZM738.7 491.5 767.0 489.7 765.9 464.3 737.5 466.1ZM737.5 466.1 765.9 464.3 765.4 438.1 737.2 439.8ZM737.2 439.8 765.4 438.1 765.5 411.3 737.4 412.8ZM737.4 412.8 765.5 411.3 766.1 384.0 738.2 385.3ZM738.2 385.3 766.1 384.0 767.1 356.3 739.4 357.4ZM739.4 357.4 767.1 356.3 768.4 328.3 740.9 329.2ZM740.9 329.2 768.4 328.3 770.0 300.1 742.6 300.8ZM742.6 300.8 770.0 300.1 771.9 271.6 744.6 272.2ZM744.6 272.2 771.9 271.6 773.9 243.1 746.7 243.5ZM746.7 243.5 773.9 243.1 775.9 214.5 748.9 214.8ZM748.9 214.8 775.9 214.5 778.0 186.0 751.0 186.2ZM751.0 186.2 778.0 186.0 779.8 157.8 753.0 157.8ZM753.0 157.8 779.8 157.8 781.1 130.0 754.4 130.0ZM777.1 583.0 804.4 583.0 801.7 560.2 774.1 560.8ZM774.1 560.8 801.7 560.2 799.2 536.8 771.3 537.9ZM771.3 537.9 799.2 536.8 797.0 512.7 768.8 514.2ZM768.8 514.2 797.0 512.7 795.4 487.9 767.0 489.7ZM767.0 489.7 795.4 487.9 794.3 462.5 765.9 464.3ZM765.9 464.3 794.3 462.5 793.8 436.4 765.4 438.1ZM765.4 438.1 793.8 436.4 793.8 409.7 765.5 411.3ZM765.5 411.3 793.8 409.7 794.2 382.5 766.1 384.0ZM766.1 384.0 794.2 382.5 795.1 355.0 767.1 356.3ZM767.1 356.3 795.1 355.0 796.3 327.2 768.4 328.3ZM768.4 328.3 796.3 327.2 797.7 299.1 770.0 300.1ZM770.0 300.1 797.7 299.1 799.4 270.8 771.9 271.6ZM771.9 271.6 799.4 270.8 801.2 242.5 773.9 243.1ZM773.9 243.1 801.2 242.5 803.1 214.1 775.9 214.5ZM775.9 214.5 803.1 214.1 805.0 185.8 778.0 186.0ZM778.0 186.0 805.0 185.8 806.7 157.7 779.8 157.8ZM779.8 157.8 806.7 157.7 807.9 130.0 781.1 130.0ZM804.4 583.0 831.7 583.0 829.4 559.6 801.7 560.2ZM801.7 560.2 829.4 559.6 827.2 535.7 799.2 536.8ZM799.2 536.8 827.2 535.7 825.3 511.2 797.0 512.7ZM797.0 512.7 825.3 511.2 823.9 486.2 795.4 487.9ZM795.4 487.9 823.9 486.2 822.9 460.6 794.3 462.5ZM794.3 462.5 822.9 460.6 822.4 434.5 793.8 436.4ZM793.8 436.4 822.4 434.5 822.4 407.8 793.8 409.7ZM793.8 409.7 822.4 407.8 822.7 380.8 794.2 382.5ZM794.2 382.5 822.7 380.8 823.4 353.4 795.1 355.0ZM795.1 355.0 823.4 353.4 824.5 325.8 796.3 327.2ZM796.3 327.2 824.5 325.8 825.7 297.9 797.7 299.1ZM797.7 299.1 825.7 297.9 827.2 269.9 799.4 270.8ZM799.4 270.8 827.2 269.9 828.8 241.7 801.2 242.5ZM801.2 242.5 828.8 241.7 830.5 213.6 803.1 214.1ZM803.1 214.1 830.5 213.6 832.1 185.5 805.0 185.8ZM805.0 185.8 832.1 185.5 833.7 157.5 806.7 157.7ZM806.7 157.7 833.7 157.5 834.7 130.0 807.9 130.0ZM831.7 583.0 859.0 583.0 857.1 559.0 829.4 559.6ZM829.4 559.6 857.1 559.0 855.2 534.6 827.2 535.7ZM827.2 535.7 855.2 534.6 853.7 509.7 825.3 511.2ZM825.3 511.2 853.7 509.7 852.5 484.4 823.9 486.2ZM823.9 486.2 852.5 484.4 851.7 458.7 822.9 460.6ZM822.9 460.6 851.7 458.7 851.2 432.5 822.4 434.5ZM822.4 434.5 851.2 432.5 851.2 405.9 822.4 407.8ZM822.4 407.8 851.2 405.9 851.4 378.9 822.7 380.8ZM822.7 380.8 851.4 378.9 852.0 351.7 823.4 353.4ZM823.4 353.4 852.0 351.7 852.9 324.2 824.5 325.8ZM824.5 325.8 852.9 324.2 853.9 296.6 825.7 297.9ZM825.7 297.9 853.9 296.6 855.2 268.8 827.2 269.9ZM827.2 269.9 855.2 268.8 856.5 240.9 828.8 241.7ZM828.8 241.7 856.5 240.9 857.9 213.0 830.5 213.6ZM830.5 213.6 857.9 213.0 859.3 185.1 832.1 185.5ZM832.1 185.5 859.3 185.1 860.6 157.4 833.7 157.5ZM833.7 157.5 860.6 157.4 861.5 130.0 834.7 130.0ZM859.0 583.0 886.3 583.0 884.8 558.4 857.1 559.0ZM857.1 559.0 884.8 558.4 883.3 533.5 855.2 534.6ZM855.2 534.6 883.3 533.5 882.1 508.2 853.7 509.7ZM853.7 509.7 882.1 508.2 881.2 482.6 852.5 484.4ZM852.5 484.4 881.2 482.6 880.5 456.7 851.7 458.7ZM851.7 458.7 880.5 456.7 880.2 430.4 851.2 432.5ZM851.2 432.5 880.2 430.4 880.1 403.8 851.2 405.9ZM851.2 405.9 880.1 403.8 880.3 376.9 851.4 378.9ZM851.4 378.9 880.3 376.9 880.8 349.8 852.0 351.7ZM852.0 351.7 880.8 349.8 881.4 322.6 852.9 324.2ZM852.9 324.2 881.4 322.6 882.3 295.1 853.9 296.6ZM853.9 296.6 882.3 295.1 883.3 267.6 855.2 268.8ZM855.2 268.8 883.3 267.6 884.3 240.0 856.5 240.9ZM856.5 240.9 884.3 240.0 885.5 212.3 857.9 213.0ZM857.9 213.0 885.5 212.3 886.6 184.7 859.3 185.1ZM859.3 185.1 886.6 184.7 887.6 157.2 860.6 157.4ZM860.6 157.4 887.6 157.2 888.3 130.0 861.5 130.0ZM886.3 583.0 913.6 583.0 912.5 557.8 884.8 558.4ZM884.8 558.4 912.5 557.8 911.5 532.4 883.3 533.5ZM883.3 533.5 911.5 532.4 910.6 506.7 882.1 508.2ZM882.1 508.2 910.6 506.7 909.9 480.8 881.2 482.6ZM881.2 482.6 909.9 480.8 909.5 454.7 880.5 456.7ZM880.5 456.7 909.5 454.7 909.2 428.3 880.2 430.4ZM880.2 430.4 909.2 428.3 909.2 401.7 880.1 403.8ZM880.1 403.8 909.2 401.7 909.3 374.9 880.3 376.9ZM880.3 376.9 909.3 374.9 909.6 347.9 880.8 349.8ZM880.8 349.8 909.6 347.9 910.1 320.9 881.4 322.6ZM881.4 322.6 910.1 320.9 910.7 293.6 882.3 295.1ZM882.3 295.1 910.7 293.6 911.4 266.4 883.3 267.6ZM883.3 267.6 911.4 266.4 912.2 239.0 884.3 240.0ZM884.3 240.0 912.2 239.0 913.0 211.7 885.5 212.3ZM885.5 212.3 913.0 211.7 913.8 184.3 886.6 184.7ZM886.6 184.7 913.8 184.3 914.6 157.1 887.6 157.2ZM887.6 157.2 914.6 157.1 915.1 130.0 888.3 130.0ZM913.6 583.0 940.9 583.0 940.2 557.2 912.5 557.8ZM912.5 557.8 940.2 557.2 939.6 531.3 911.5 532.4ZM911.5 532.4 939.6 531.3 939.1 505.3 910.6 506.7ZM910.6 506.7 939.1 505.3 938.7 479.1 909.9 480.8ZM909.9 480.8 938.7 479.1 938.4 452.8 909.5 454.7ZM909.5 454.7 938.4 452.8 938.2 426.3 909.2 428.3ZM909.2 428.3 938.2 426.3 938.2 399.7 909.2 401.7ZM909.2 401.7 938.2 399.7 938.3 372.9 909.3 374.9ZM909.3 374.9 938.3 372.9 938.5 346.1 909.6 347.9ZM909.6 347.9 938.5 346.1 938.8 319.2 910.1 320.9ZM910.1 320.9 938.8 319.2 939.2 292.2 910.7 293.6ZM910.7 293.6 939.2 292.2 939.6 265.1 911.4 266.4ZM911.4 266.4 939.6 265.1 940.1 238.1 912.2 239.0ZM912.2 239.0 940.1 238.1 940.6 211.0 913.0 211.7ZM913.0 211.7 940.6 211.0 941.1 183.9 913.8 184.3ZM913.8 184.3 941.1 183.9 941.6 156.9 914.6 157.1ZM914.6 157.1 941.6 156.9 941.9 130.0 915.1 130.0ZM940.9 583.0 968.2 583.0 967.9 556.7 940.2 557.2ZM940.2 557.2 967.9 556.7 967.7 530.4 939.6 531.3ZM939.6 531.3 967.7 530.4 967.5 504.0 939.1 505.3ZM939.1 505.3 967.5 504.0 967.3 477.5 938.7 479.1ZM938.7 479.1 967.3 477.5 967.2 451.0 938.4 452.8ZM938.4 452.8 967.2 451.0 967.1 424.4 938.2 426.3ZM938.2 426.3 967.1 424.4 967.1 397.8 938.2 399.7ZM938.2 399.7 967.1 397.8 967.2 371.1 938.3 372.9ZM938.3 372.9 967.2 371.1 967.3 344.4 938.5 346.1ZM938.5 346.1 967.3 344.4 967.4 317.6 938.8 319.2ZM938.8 319.2 967.4 317.6 967.6 290.8 939.2 292.2ZM939.2 292.2 967.6 290.8 967.7 264.0 939.6 265.1ZM939.6 265.1 967.7 264.0 967.9 237.2 940.1 238.1ZM940.1 238.1 967.9 237.2 968.2 210.4 940.6 211.0ZM940.6 211.0 968.2 210.4 968.4 183.6 941.1 183.9ZM941.1 183.9 968.4 183.6 968.6 156.8 941.6 156.9ZM941.6 156.9 968.6 156.8 968.7 130.0 941.9 130.0ZM968.2 583.0 995.5 583.0 995.5 556.4 967.9 556.7ZM967.9 556.7 995.5 556.4 995.5 529.7 967.7 530.4ZM967.7 530.4 995.5 529.7 995.5 503.1 967.5 504.0ZM967.5 504.0 995.5 503.1 995.5 476.4 967.3 477.5ZM967.3 477.5 995.5 476.4 995.5 449.8 967.2 451.0ZM967.2 451.0 995.5 449.8 995.5 423.1 967.1 424.4ZM967.1 424.4 995.5 423.1 995.5 396.5 967.1 397.8ZM967.1 397.8 995.5 396.5 995.5 369.8 967.2 371.1ZM967.2 371.1 995.5 369.8 995.5 343.2 967.3 344.4ZM967.3 344.4 995.5 343.2 995.5 316.5 967.4 317.6ZM967.4 317.6 995.5 316.5 995.5 289.9 967.6 290.8ZM967.6 290.8 995.5 289.9 995.5 263.2 967.7 264.0ZM967.7 264.0 995.5 263.2 995.5 236.6 967.9 237.2ZM967.9 237.2 995.5 236.6 995.5 209.9 968.2 210.4ZM968.2 210.4 995.5 209.9 995.5 183.3 968.4 183.6ZM968.4 183.6 995.5 183.3 995.5 156.6 968.6 156.8ZM968.6 156.8 995.5 156.6 995.5 130.0 968.7 130.0ZM540.0 537.0 549.0 537.9 553.2 510.4 540.0 509.9ZM540.0 509.9 553.2 510.4 555.9 486.2 540.0 482.7ZM549.0 537.9 557.6 540.5 567.6 514.3 553.2 510.4ZM553.2 510.4 567.6 514.3 572.9 490.9 555.9 486.2ZM557.6 540.5 565.6 544.8 582.0 518.3 567.6 514.3ZM567.6 514.3 582.0 518.3 592.2 496.9 572.9 490.9ZM565.6 544.8 572.5 550.5 595.5 527.1 582.0 518.3ZM582.0 518.3 595.5 527.1 617.3 506.4 592.2 496.9ZM572.5 550.5 578.2 557.4 604.3 540.7 595.5 527.1ZM595.5 527.1 604.3 540.7 626.8 531.6 617.3 506.4ZM578.2 557.4 582.5 565.4 609.1 556.7 604.3 540.7ZM604.3 540.7 609.1 556.7 633.0 551.1 626.8 531.6ZM582.5 565.4 585.1 574.0 613.1 570.3 609.1 556.7ZM609.1 556.7 613.1 570.3 637.5 567.7 633.0 551.1ZM585.1 574.0 586.0 583.0 613.3 583.0 613.1 570.3ZM613.1 570.3 613.3 583.0 640.6 583.0 637.5 567.7Z" fill="#07d9d9" stroke="#074448" stroke-width="1.15" stroke-linejoin="round"/></svg>
<!-- view triad top-right -->
<svg style="left:1140px;top:118px" width="100" height="110">
<text x="32" y="14" font-size="10" font-family="Liberation Sans" fill="#cfc04a">Y</text>
<path d="M36 24V97" stroke="#d4c4ec" stroke-width="2"/>
<circle cx="36" cy="23" r="3.6" fill="#dccdf4"/>
<path d="M36 33.5A34 34 0 0 1 70 67.5H36z" fill="#175e6a" stroke="#d4c4ec" stroke-width="1.6"/>
<text x="78" y="71" font-size="10" font-family="Liberation Sans" fill="#cfc04a">X</text>
<text x="32" y="71" font-size="10" font-family="Liberation Sans" fill="#cfc04a">Z</text>
<path d="M16.5 97.5H63" stroke="#d4c4ec" stroke-width="2"/>
<rect x="31.5" y="93" width="9" height="9" fill="#d00000"/>
</svg>
<div class="a" style="left:1266px;top:285px;width:6px;height:118px;background:linear-gradient(#1a8ef0,#7ac0f8);border-radius:3px"></div>
<!-- bottom-left triad -->
<svg style="left:330px;top:522px" width="70" height="40">
<path d="M12.6 22V9" stroke="#10c010" stroke-width="3"/><path d="M12.6 3l5.5 8h-11z" fill="#10b010"/>
<path d="M17 29.5H33" stroke="#c00000" stroke-width="3.5"/><path d="M42 29.5l-10-4.5v9z" fill="#a00000"/>
<circle cx="12.6" cy="29.5" r="4.5" fill="#1010b0"/>
<text x="8" y="34" font-size="12" font-weight="bold" font-family="Liberation Sans" fill="#f0f0f0">Z</text>
<text x="48.5" y="34.3" font-size="16" font-weight="bold" font-family="Liberation Sans" fill="#ececf2">X</text>
</svg>

<!-- prompt area -->
<div class="a" style="left:202px;top:594px;width:1067px;height:33px;background:linear-gradient(#fdfdfd,#f1f1f1)"></div>
<div class="a" style="left:206px;top:594px;width:1063px;height:28px;background:linear-gradient(#fbfbfb,#f2f2f2)"></div>
<div class="a" style="left:212px;top:600px;width:14px;height:17px;background:#f8f8f8;border:1px solid #e8e8e8;border-radius:2px"></div>
<svg style="left:212px;top:602px" width="14" height="12"><path d="M2 6h10" stroke="#999" stroke-width="2.2"/><path d="M0.5 6l5-4.5v9z" fill="#999"/></svg>
<div class="a" style="left:230px;top:600px;width:14px;height:17px;background:#fff;border:1px solid #e0e0e0;border-radius:2px"></div>
<svg style="left:232px;top:603px" width="10" height="11"><path d="M1 1l8 9M9 1L1 10" stroke="#e01010" stroke-width="1.6"/></svg>
<svg style="left:1184px;top:599px" width="90" height="22"><path d="M8 2.5c3-1.5 6 0 3.5 2.5c3 0.5 1.5 4-2 3.5" fill="none" stroke="#2a9c9c" stroke-width="1.1"/><path d="M3 19c2-5 4-8 5-9M6 10.5c5-1 6 3 3 6-2 2-5 2.5-6 2.5" fill="none" stroke="#2a9c9c" stroke-width="1.3"/><path d="M18 10.5c-2-1.5-5-0.5-4.5 1.5 0.5 2 5 1.5 4.5 4-0.5 2-4 2-5.5 0.5" fill="none" stroke="#2a9c9c" stroke-width="1.4"/>
<text x="24" y="18.5" font-size="11.5" font-weight="bold" font-style="italic" font-family="Liberation Sans" fill="#2a9c9c" letter-spacing="1.2" transform="scale(1.08,0.95)">SIMULIA</text></svg>
<div class="a" style="left:0;top:627px;width:1269px;height:1px;background:#d8d8d8"></div>
<!-- message area -->
<div class="a" style="left:0;top:628px;width:1269px;height:29px;background:#f0f0f0"></div>
<div class="a" style="left:30px;top:627px;width:1228px;height:30px;background:#fff;border:1px solid #a0a0a0;border-bottom:none"></div>
<svg style="left:4px;top:632px" width="18" height="19"><rect x="3" y="0.5" width="13" height="13" fill="#e8e2c8" stroke="#555" stroke-width="0.8"/><path d="M1 17l4-4 2 2-4 4z" fill="#e0b030" stroke="#333" stroke-width="0.5"/><path d="M5 13l6-6 2 2-6 6" fill="#888" stroke="#333" stroke-width="0.5"/></svg>
<div class="mono" style="left:33px;top:631px;color:#3a3a3a">The model database "G:\3 Group Project\EXAMPLE\demo6\Plate-Contact.cae" has been opened.
289 elements have been generated on part: plate</div>


<!-- dialog -->
<div class="a" style="left:121px;top:226px;width:346px;height:299px;border-radius:6px;box-shadow:0 6px 20px rgba(0,0,0,0.22),0 0 1px rgba(0,0,0,0.5);background:linear-gradient(90deg,#fcfcfc,#f4f4f4 55%,#efefef);overflow:hidden">
 <div class="a" style="left:0;top:0;width:346px;height:25px;background:#eef3f4"></div>
</div>
<svg style="left:128px;top:232px" width="13" height="13"><path d="M4 0H8L12 4.5V5H0V4.5Z" fill="#5858a8"/><path d="M0 6.3H12V6.8L8 12H4L0 6.8Z" fill="#5858a8"/></svg>
<div class="t" style="left:143.6px;top:231.1px;color:#8a8a8a;letter-spacing:-0.27px">Mesh Statistics</div>
<svg style="left:449px;top:234px" width="10" height="10"><path d="M0.5 0.5l8.5 8.5M9 0.5L0.5 9" stroke="#8a8a8a" stroke-width="1"/></svg>
<!-- summary group -->
<div class="a" style="left:124px;top:262px;width:340px;height:62px;border:1px solid #dddddd;border-radius:1px"></div>
<div class="a" style="left:131px;top:259px;width:55px;height:6px;background:#fbfbfb"></div>
<div class="t" style="left:133.5px;top:257.7px;letter-spacing:-0.15px">Summary</div>
<div class="t" style="left:130.6px;top:280.1px;letter-spacing:-0.14px">Total number of nodes: 326</div>
<div class="t" style="left:130.6px;top:302.2px;letter-spacing:-0.15px">Total number of elements: 289</div>
<!-- details group -->
<div class="a" style="left:125px;top:337px;width:338px;height:156px;border:1px solid #dddddd"></div>
<div class="a" style="left:131px;top:334px;width:40px;height:6px;background:#fbfbfb"></div>
<div class="t" style="left:133.5px;top:332px;letter-spacing:-0.17px">Details</div>
<!-- tab pane -->
<div class="a" style="left:130px;top:374px;width:327px;height:114px;border:1px solid #e2e2e2;background:#f6f6f6"></div>
<div class="a" style="left:131px;top:353px;width:49px;height:21px;background:#ebebeb;border:1px solid #e0e0e0;border-bottom:none"></div>
<div class="a" style="left:179px;top:351px;width:100px;height:24px;background:#f6f6f6;border:1px solid #e0e0e0;border-bottom:none"></div>
<div class="t" style="left:136.4px;top:357px;letter-spacing:-0.20px">By Part</div>
<div class="t" style="left:185.9px;top:357px;letter-spacing:-0.36px">By Element Type</div>
<!-- table -->
<div class="a" style="left:134px;top:379px;width:320px;height:105px;background:#fff;border:1px solid #a8a8a8;box-shadow:inset 1px 1px 0 #d4d4d4"></div>
<div class="a" style="left:136px;top:414px;width:306px;height:1px;background:#e6e6e6"></div>
<div class="a" style="left:136px;top:431px;width:306px;height:1px;background:#e6e6e6"></div>
<div class="a" style="left:148px;top:381px;width:1px;height:51px;background:#e6e6e6"></div>
<div class="a" style="left:221px;top:381px;width:1px;height:51px;background:#e6e6e6"></div>
<div class="a" style="left:295px;top:381px;width:1px;height:51px;background:#e6e6e6"></div>
<div class="a" style="left:368px;top:381px;width:1px;height:51px;background:#e6e6e6"></div>
<div class="a" style="left:441px;top:381px;width:1px;height:51px;background:#e6e6e6"></div>
<div class="t" style="left:148px;top:383px;width:73px;text-align:center;font-weight:bold;line-height:16px;letter-spacing:-0.4px">Element<br>Type</div>
<div class="t" style="left:221px;top:383px;width:74px;text-align:center;font-weight:bold;line-height:16px;letter-spacing:-0.4px">Element<br>Shape</div>
<div class="t" style="left:295px;top:383px;width:73px;text-align:center;font-weight:bold;line-height:16px;letter-spacing:-0.1px">Geometric<br>Order</div>
<div class="t" style="left:368px;top:391px;width:73px;text-align:center;font-weight:bold;letter-spacing:-0.5px">Elements</div>
<div class="t" style="left:139px;top:417px;font-weight:bold">1</div>
<div class="t" style="left:148px;top:417px;width:73px;text-align:center;letter-spacing:-0.8px">CPS4I</div>
<div class="t" style="left:221px;top:417px;width:74px;text-align:center;letter-spacing:-0.2px">quadrilateral</div>
<div class="t" style="left:295px;top:417px;width:73px;text-align:center;letter-spacing:-0.3px">linear</div>
<div class="t" style="left:368px;top:417px;width:73px;text-align:center">289</div>
<!-- dismiss -->
<div class="a" style="left:267px;top:501px;width:53px;height:21px;background:#fdfdfd;border:1px solid #d6d6d6;border-radius:3px"></div>
<div class="t" style="left:274px;top:505px;letter-spacing:-0.58px">Dismiss</div>

</body></html>
